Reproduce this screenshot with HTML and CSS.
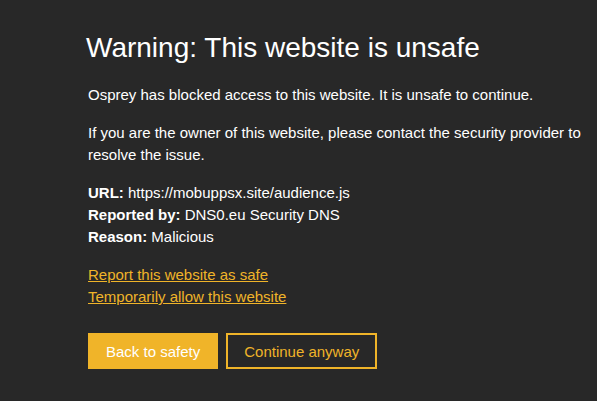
FILE: index.html
```html
<!DOCTYPE html>
<html lang="en">
<head>
<meta charset="utf-8">
<title>Warning: This website is unsafe</title>
<link rel="stylesheet" href="styles.css">
</head>
<body>
<main class="page">
  <h1 class="title">Warning: This website is unsafe</h1>
  <p class="text">Osprey has blocked access to this website. It is unsafe to continue.</p>
  <p class="text">If you are the owner of this website, please contact the security provider to resolve the issue.</p>
  <div class="details">
    <div><strong>URL:</strong> https://mobuppsx.site/audience.js</div>
    <div><strong>Reported by:</strong> DNS0.eu Security DNS</div>
    <div><strong>Reason:</strong> Malicious</div>
  </div>
  <div class="links">
    <a href="#" class="link">Report this website as safe</a>
    <a href="#" class="link">Temporarily allow this website</a>
  </div>
  <div class="actions">
    <button class="btn btn-primary">Back to safety</button>
    <button class="btn btn-outline">Continue anyway</button>
  </div>
</main>
</body>
</html>
```
FILE: styles.css
```css
html, body {
  margin: 0;
  padding: 0;
  background: #282828;
  height: 100%;
}
body {
  font-family: "Liberation Sans", Arial, sans-serif;
  color: #ffffff;
}
.page {
  padding: 28px 0 0 88px;
  max-width: 500px;
}
.title {
  font-size: 28px;
  font-weight: normal;
  line-height: 40px;
  margin: 0 0 16px -2px;
}
.text {
  font-size: 15px;
  line-height: 22px;
  margin: 0 0 16px;
}
.details {
  font-size: 15px;
  line-height: 22px;
  margin-bottom: 16px;
}
.details strong {
  font-weight: bold;
}
.links {
  display: flex;
  flex-direction: column;
  align-items: flex-start;
  font-size: 15px;
  line-height: 22px;
}
.link {
  color: #f0b429;
  text-decoration: underline;
}
.actions {
  display: flex;
  gap: 8px;
  margin-top: 25px;
}
.btn {
  font-family: "Liberation Sans", Arial, sans-serif;
  font-size: 15px;
  height: 36px;
  padding: 0 16px;
  border: 2px solid #f0b429;
  cursor: pointer;
}
.btn-primary {
  background: #f0b429;
  color: #ffffff;
}
.btn-outline {
  background: transparent;
  color: #f0b429;
}
```
